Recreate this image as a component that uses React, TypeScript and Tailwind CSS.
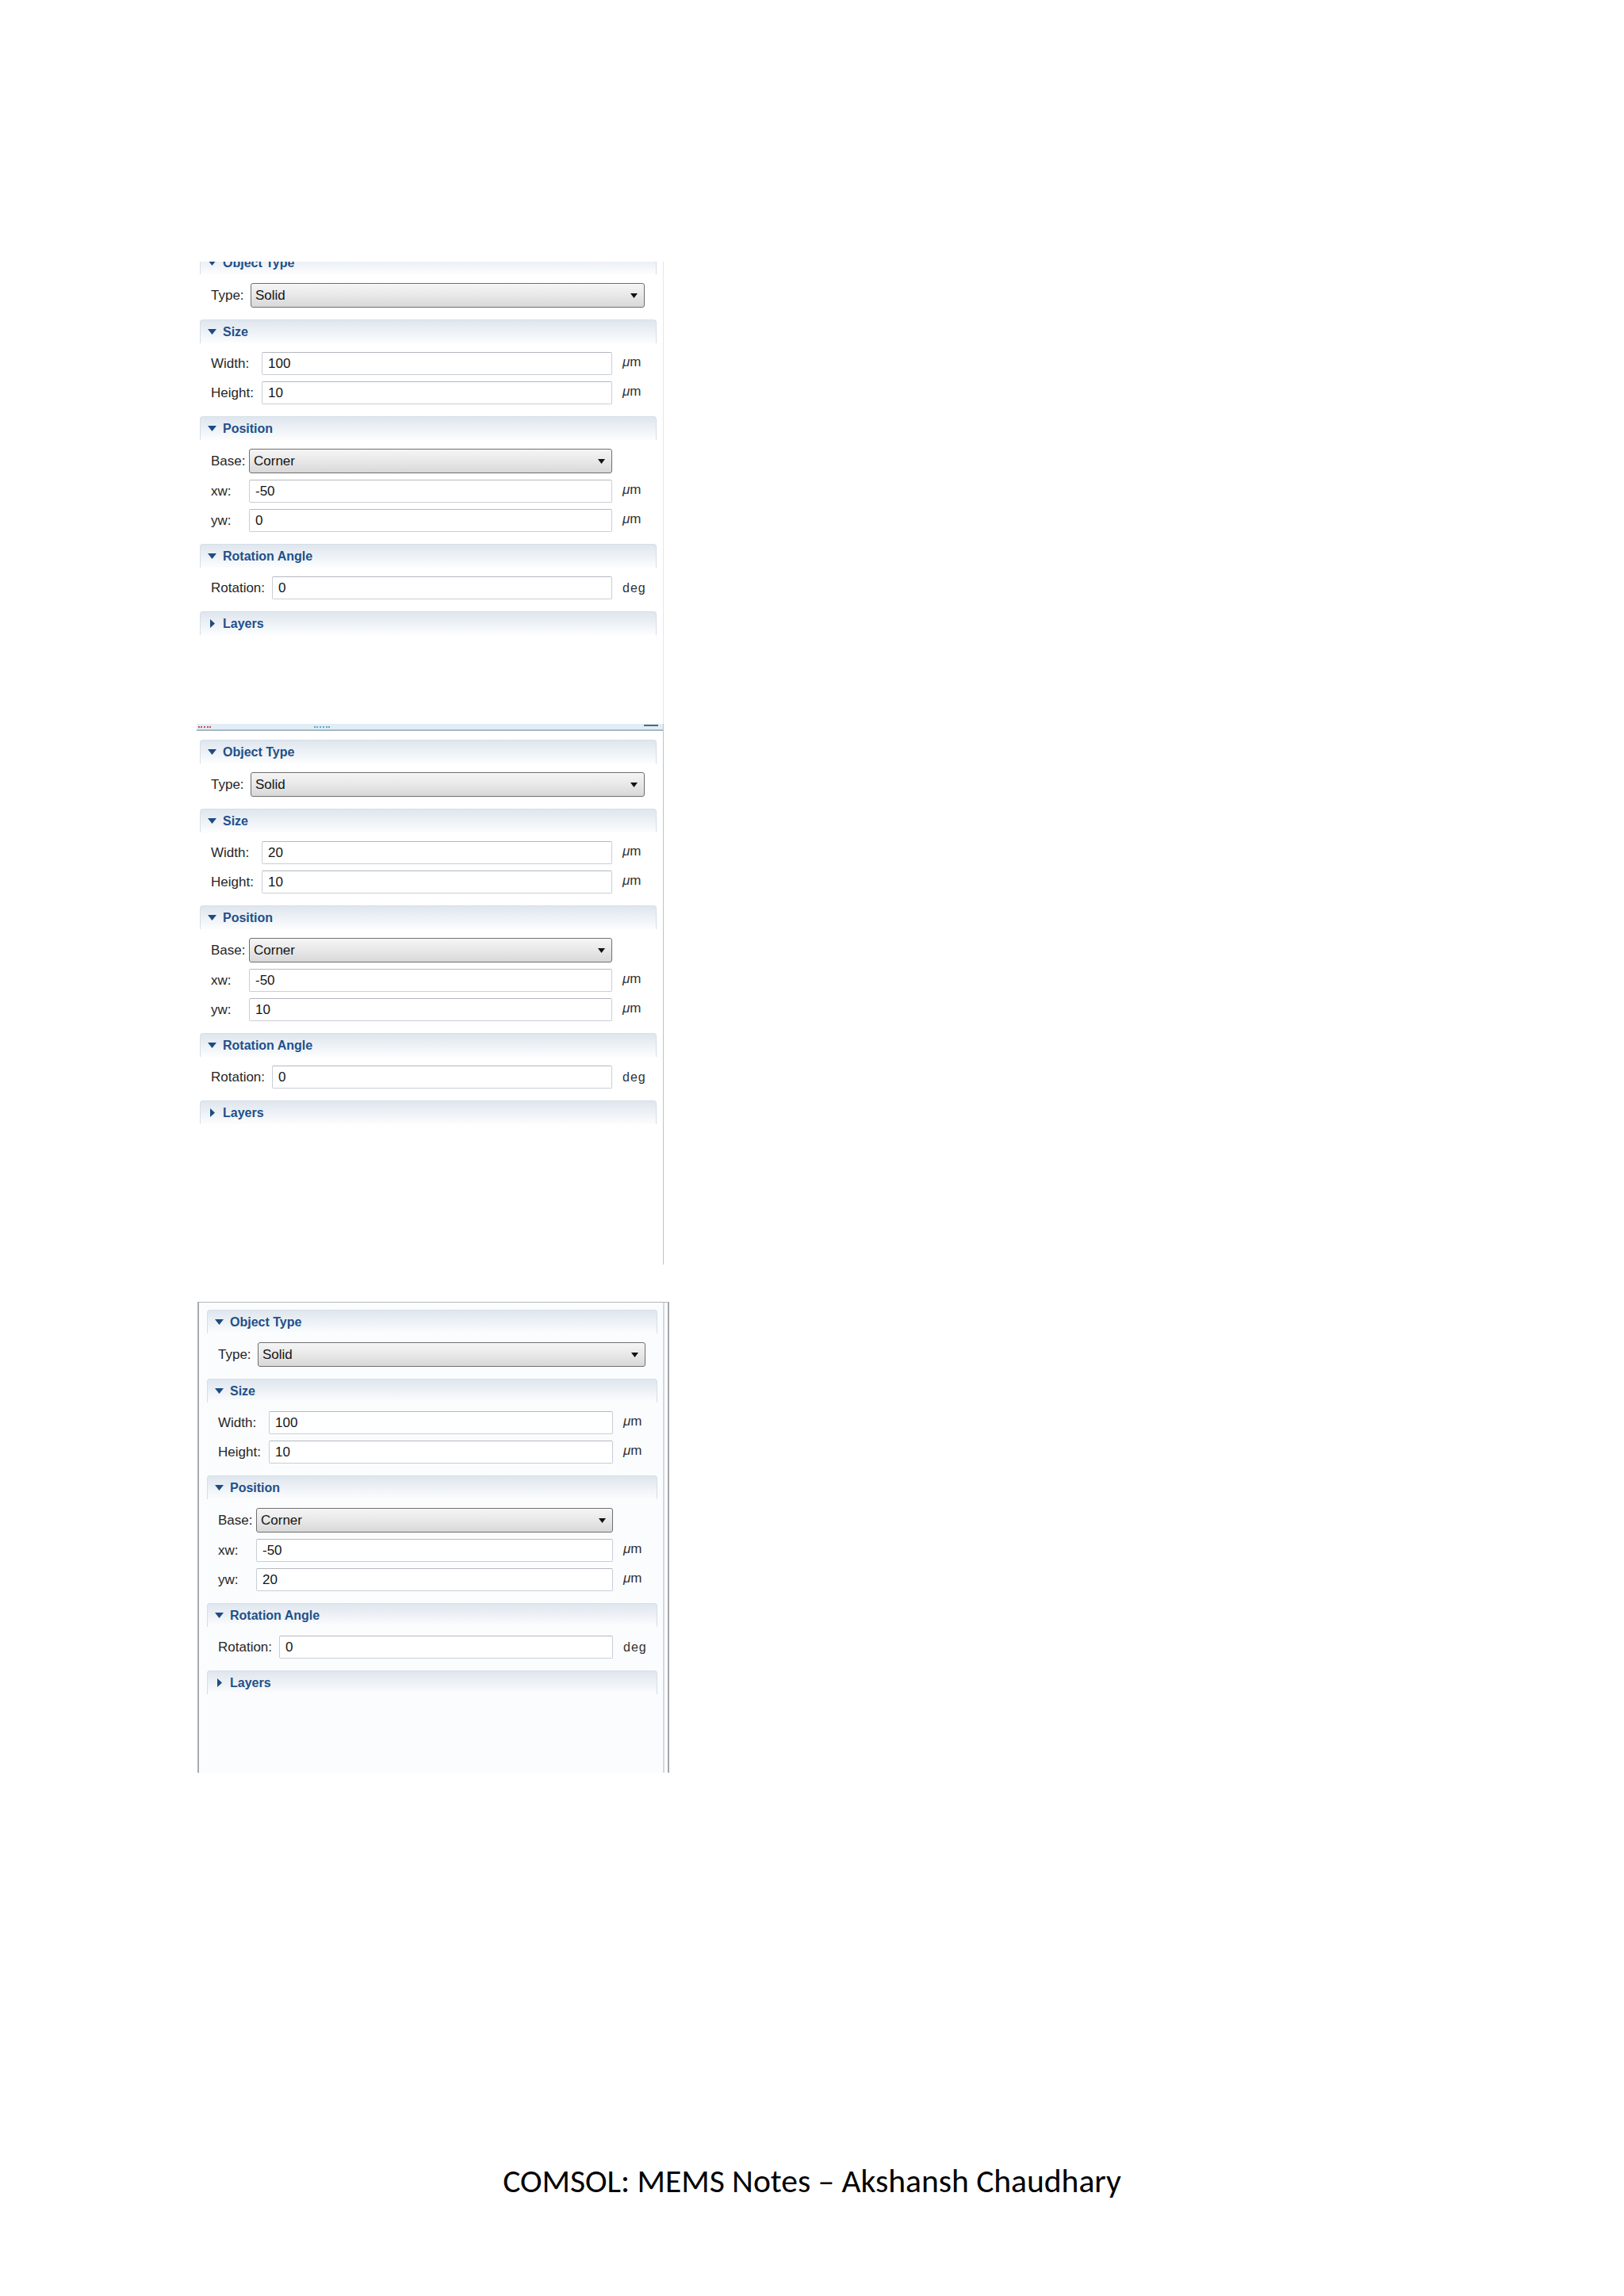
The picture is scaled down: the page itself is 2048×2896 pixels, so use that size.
import React from 'react';

type Row = {
  label: string;
  kind: 'select' | 'input';
  value: string;
  unit?: string;
  span?: boolean;
};

type Section = {
  title: string;
  open: boolean;
  cols: string;
  rows: Row[];
};

const makeSections = (width: string, xw: string, yw: string): Section[] => [
  {
    title: 'Object Type',
    open: true,
    cols: 'grid-cols-[50px_1fr_41px]',
    rows: [{ label: 'Type:', kind: 'select', value: 'Solid', span: true }],
  },
  {
    title: 'Size',
    open: true,
    cols: 'grid-cols-[64px_1fr_41px]',
    rows: [
      { label: 'Width:', kind: 'input', value: width, unit: 'um' },
      { label: 'Height:', kind: 'input', value: '10', unit: 'um' },
    ],
  },
  {
    title: 'Position',
    open: true,
    cols: 'grid-cols-[48px_1fr_41px]',
    rows: [
      { label: 'Base:', kind: 'select', value: 'Corner' },
      { label: 'xw:', kind: 'input', value: xw, unit: 'um' },
      { label: 'yw:', kind: 'input', value: yw, unit: 'um' },
    ],
  },
  {
    title: 'Rotation Angle',
    open: true,
    cols: 'grid-cols-[77px_1fr_41px]',
    rows: [{ label: 'Rotation:', kind: 'input', value: '0', unit: 'deg' }],
  },
  { title: 'Layers', open: false, cols: '', rows: [] },
];

const Header = ({ title, open }: { title: string; open: boolean }) => (
  <div className="h-[30px] rounded-t-[4px] border border-b-0 border-[#d6dee8] bg-gradient-to-b from-[#dfe6ee] to-[#fcfdfe] flex items-center pl-[9px]">
    <div className="w-[11px] flex justify-center">
      {open ? (
        <svg width="11" height="7" viewBox="0 0 11 7">
          <path d="M0 0H11L5.5 7Z" fill="#1d4b84" />
        </svg>
      ) : (
        <svg width="6" height="11" viewBox="0 0 6 11">
          <path d="M0 0L6 5.5L0 11Z" fill="#1d4b84" />
        </svg>
      )}
    </div>
    <span className="ml-[8px] text-[16px] font-bold text-[#21508a] leading-none">{title}</span>
  </div>
);

const Select = ({ value, span }: { value: string; span?: boolean }) => (
  <div
    className={`${span ? 'col-span-2' : ''} h-[31px] rounded-[3px] border border-[#6f6f6f] bg-gradient-to-b from-[#f5f5f5] via-[#e8e8e8] to-[#d8d8d8] flex items-center justify-between pl-[5px] pr-[8px]`}
  >
    <span className="text-[17px] text-[#141414]">{value}</span>
    <svg width="9" height="6" viewBox="0 0 9 6">
      <path d="M0 0H9L4.5 6Z" fill="#111" />
    </svg>
  </div>
);

const Unit = ({ unit }: { unit?: string }) => {
  if (!unit) return <div />;
  if (unit === 'deg')
    return <div className="pl-[13px] text-[16px] tracking-[1px] text-[#333]">deg</div>;
  return (
    <div className="pl-[13px] text-[17px] text-[#333] -mt-[4px]">
      <span className="italic">μ</span>m
    </div>
  );
};

const SectionBlock = ({ s }: { s: Section }) => (
  <div>
    <Header title={s.title} open={s.open} />
    {s.rows.length > 0 && (
      <div className={`grid ${s.cols} gap-y-[8px] items-center pl-[14px] pr-[15px] pt-[11px] pb-[15px]`}>
        {s.rows.map((r) => (
          <React.Fragment key={r.label}>
            <div className="text-[17px] text-[#262626] whitespace-nowrap">{r.label}</div>
            {r.kind === 'select' ? (
              <Select value={r.value} span={r.span} />
            ) : (
              <div className="h-[29px] rounded-[2px] border border-[#c9ced5] border-t-[#b4b9c0] bg-white flex items-center pl-[7px]">
                <span className="text-[17px] text-[#141414]">{r.value}</span>
              </div>
            )}
            {!r.span && <Unit unit={r.unit} />}
          </React.Fragment>
        ))}
      </div>
    )}
  </div>
);

const Sections = ({ items }: { items: Section[] }) => (
  <div className="flex flex-col">
    {items.map((s) => (
      <SectionBlock key={s.title} s={s} />
    ))}
  </div>
);

export default function App() {
  const p1 = makeSections('100', '-50', '0');
  const p2 = makeSections('20', '-50', '10');
  const p3 = makeSections('100', '-50', '20');

  return (
    <div className="w-[2048px] h-[2896px] bg-white flex flex-col font-['Liberation_Sans',Arial,sans-serif]">
      <div className="h-[330px]" />

      {/* first capture, top cut off */}
      <div className="ml-[250px] w-[587px] h-[583px] overflow-hidden border-r border-[#e4e6e8]">
        <div className="ml-[2px] w-[576px] -mt-[14px]">
          <Sections items={p1} />
        </div>
      </div>

      {/* second capture */}
      <div className="ml-[248px] w-[589px] h-[682px] border-r border-[#bfc3c6] flex flex-col">
        <div className="h-[7px] bg-[#e1edf4] flex items-center">
          <div className="ml-[2px] w-[16px] h-[2px] border-t-2 border-dotted border-[#d94b4b]" />
          <div className="ml-[130px] w-[20px] h-[2px] border-t-2 border-dotted border-[#5aa6d6]" />
          <div className="ml-auto mr-[6px] w-[18px] h-[2px] bg-[#4f6b74] -mt-[3px]" />
        </div>
        <div className="h-[2px] bg-[#a7b8c5]" />
        <div className="ml-[4px] w-[576px] mt-[11px]">
          <Sections items={p2} />
        </div>
      </div>

      {/* third capture */}
      <div className="mt-[47px] ml-[249px] w-[595px] h-[594px] bg-[#fbfcfd] border-l-2 border-t border-r-2 border-l-[#a9abae] border-t-[#b4b6b9] border-r-[#a4a6a9] flex">
        <div className="flex-1 pl-[10px] pr-[7px] pt-[9px]">
          <Sections items={p3} />
        </div>
        <div className="w-[2px] bg-[#cfdae3]" />
        <div className="w-[4px]" />
      </div>

      <div className="mt-[490px] text-center text-[41.5px] leading-[50px] text-black font-['Carlito','Liberation_Sans_Narrow','Liberation_Sans',sans-serif]">
        COMSOL: MEMS Notes – Akshansh Chaudhary
      </div>
    </div>
  );
}
